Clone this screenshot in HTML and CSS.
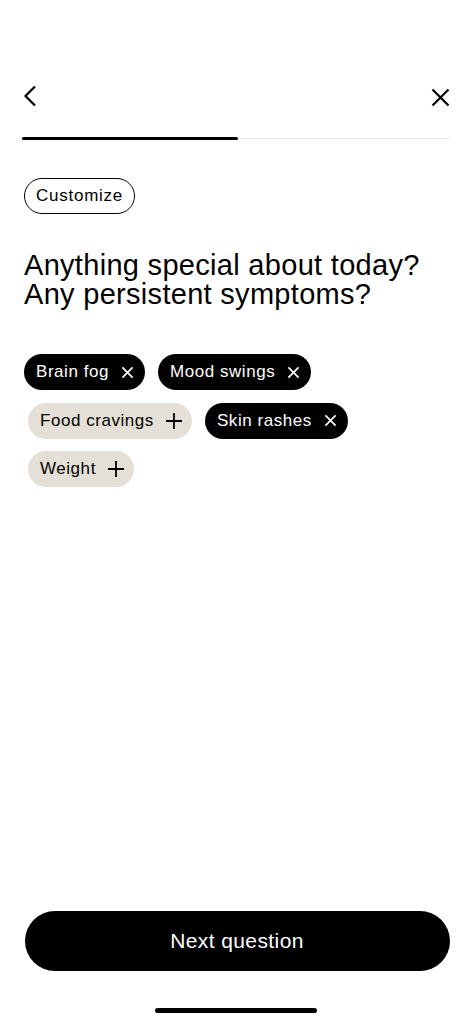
FILE: index.html
```html
<!DOCTYPE html>
<html>
<head>
<meta charset="utf-8">
<link rel="stylesheet" href="styles.css">
</head>
<body>
<div class="screen">
  <header class="topbar">
    <button class="icon-btn" aria-label="Back">
      <svg width="14" height="22" viewBox="0 0 14 22"><path d="M12 1.5 L2.5 11 L12 20.5" fill="none" stroke="#000" stroke-width="2.2"/></svg>
    </button>
    <button class="icon-btn" aria-label="Close">
      <svg width="19" height="19" viewBox="0 0 19 19"><path d="M1.5 1.5 L17.5 17.5 M17.5 1.5 L1.5 17.5" fill="none" stroke="#000" stroke-width="2.2"/></svg>
    </button>
  </header>
  <div class="progress"><div class="progress-fill"></div></div>

  <main class="content">
    <button class="customize">Customize</button>
    <h1 class="question">Anything special about today?<br>Any persistent symptoms?</h1>
    <div class="chips">
      <span class="chip selected">Brain fog<svg class="ic" viewBox="0 0 14 14"><path d="M1.5 1.5 L12.5 12.5 M12.5 1.5 L1.5 12.5" stroke="#fff" stroke-width="1.8" fill="none"/></svg></span>
      <span class="chip selected">Mood swings<svg class="ic" viewBox="0 0 14 14"><path d="M1.5 1.5 L12.5 12.5 M12.5 1.5 L1.5 12.5" stroke="#fff" stroke-width="1.8" fill="none"/></svg></span>
      <span class="chip">Food cravings<svg class="ic plus" viewBox="0 0 18 18"><path d="M9 1 V17 M1 9 H17" stroke="#000" stroke-width="1.8" fill="none"/></svg></span>
      <span class="chip selected">Skin rashes<svg class="ic" viewBox="0 0 14 14"><path d="M1.5 1.5 L12.5 12.5 M12.5 1.5 L1.5 12.5" stroke="#fff" stroke-width="1.8" fill="none"/></svg></span>
      <span class="chip">Weight<svg class="ic plus" viewBox="0 0 18 18"><path d="M9 1 V17 M1 9 H17" stroke="#000" stroke-width="1.8" fill="none"/></svg></span>
    </div>
  </main>

  <footer class="footer">
    <button class="next">Next question</button>
    <div class="home-indicator"></div>
  </footer>
</div>
</body>
</html>
```

FILE: styles.css
```css
* { box-sizing: border-box; }
html, body { margin: 0; padding: 0; background: #fff; }
body { font-family: "Liberation Sans", Arial, sans-serif; color: #000; }

.screen {
  width: 473px;
  height: 1024px;
  display: flex;
  flex-direction: column;
  padding: 0 23px 0 22px;
}

.topbar {
  display: flex;
  justify-content: space-between;
  align-items: center;
  padding-top: 85px;
  height: 107px;
}
.icon-btn {
  background: none;
  border: 0;
  padding: 0;
  display: flex;
  align-items: center;
}
.icon-btn:first-child { margin-left: 1px; }
.icon-btn:last-child { margin-top: 3px; margin-right: 0; }

.progress {
  margin-top: 30px;
  height: 3px;
  position: relative;
  display: flex;
  align-items: center;
}
.progress::before {
  content: "";
  flex: 1;
  height: 1.5px;
  background: #e6e6e3;
}
.progress-fill {
  position: absolute;
  left: 0;
  top: 0;
  width: 216px;
  height: 3px;
  background: #000;
  border-radius: 2px;
}

.content {
  flex: 1;
  padding-left: 2px;
}

.customize {
  margin-top: 38px;
  height: 36px;
  padding: 0 11px;
  border: 1px solid #000;
  border-radius: 18px;
  background: #fff;
  font-family: inherit;
  font-size: 17px;
  letter-spacing: 0.75px;
  color: #000;
}

.question {
  margin: 37px 0 0;
  font-size: 29px;
  font-weight: 400;
  line-height: 29px;
  letter-spacing: 0.3px;
}

.chips {
  margin-top: 45px;
  display: flex;
  flex-wrap: wrap;
  gap: 12.5px 13px;
  width: 340px;
}
.chip {
  display: inline-flex;
  align-items: center;
  height: 36px;
  padding: 0 11px 0 12px;
  border-radius: 18px;
  background: #e4e0d7;
  font-size: 17px;
  letter-spacing: 0.55px;
  gap: 12px;
  color: #000;
  margin-left: 4px;
}
.chip.selected {
  background: #000;
  color: #fff;
  margin-left: 0;
}
.ic { width: 13px; height: 13px; }
.ic.plus { width: 18px; height: 18px; }
.chip:not(.selected) { gap: 11px; padding-right: 9px; }

.footer {
  display: flex;
  flex-direction: column;
  align-items: center;
  padding-bottom: 11px;
}
.next {
  width: 425px;
  height: 60px;
  margin-left: 2px;
  border: 0;
  border-radius: 30px;
  background: #000;
  color: #fff;
  font-family: inherit;
  font-size: 21px;
  letter-spacing: 0.4px;
}
.home-indicator {
  margin-top: 37px;
  width: 162px;
  height: 5px;
  border-radius: 3px;
  background: #000;
}
```
